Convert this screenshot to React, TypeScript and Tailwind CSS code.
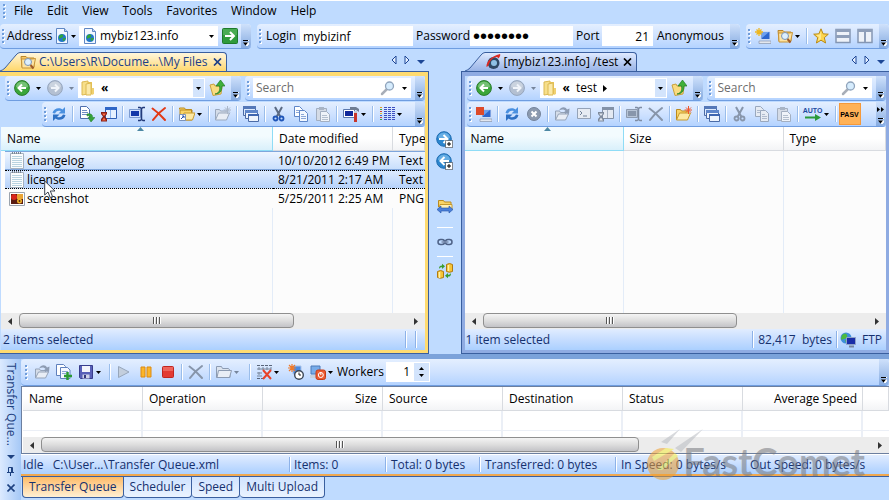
import React, { useState } from 'react';
import clsx from 'clsx';

type IconProps = { off?: boolean };

const Svg: React.FC<{ children: React.ReactNode; w?: number; h?: number }> = ({ children, w = 16, h = 16 }) => (
  <svg width={w} height={h} viewBox={`0 0 ${w} ${h}`} className="block shrink-0" aria-hidden="true">
    {children}
  </svg>
);

const Caret: React.FC<{ color?: string }> = ({ color = '#000' }) => (
  <Svg w={5} h={3}>
    <path d="M0 0h5L2.500 3z" fill={color} />
  </Svg>
);

const GlobePage = () => (
  <Svg>
    <path d="M2.500.5h8l3 3v12h-11z" fill="#f2f7ff" stroke="#5f87c4" />
    <path d="M10.500.5v3h3" fill="#c5d8f3" stroke="#5f87c4" />
    <circle cx="8" cy="10" r="4" fill="#2277c8" />
    <path d="M5 8q3-3 4-1t-2 3-2 1zM9 10l3 0-2 3q-2 0-1-3z" fill="#2fa53a" />
  </Svg>
);

const GoIcon = () => (
  <Svg>
    <rect x=".5" y=".5" width="15" height="15" rx="1" fill="#2f9a3c" stroke="#1e7a2c" />
    <path d="M1 1h14v6H1z" fill="#5bb862" opacity=".6" />
    <path d="M3 8h9M8 4l4 4-4 4" fill="none" stroke="#fff" strokeWidth="2" />
  </Svg>
);

const FolderSearch = () => (
  <Svg>
    <path d="M1 2.500h5l1.500 1.500H14v9H2z" fill="#f6c86a" stroke="#b9852a" />
    <path d="M1.500 5h11l3-.5-2 9.500H2z" fill="#fde3a2" stroke="#c79335" />
    <circle cx="8" cy="8" r="3.500" fill="#dcefff" stroke="#7d95b5" />
    <path d="M10.500 11l3 3.500" stroke="#a05a28" strokeWidth="2" />
  </Svg>
);

const Nav: React.FC<{ forward?: boolean }> = ({ forward }) => (
  <Svg>
    <circle cx="8" cy="8" r="7.400" fill={forward ? '#b4c0d2' : '#3aa63a'} stroke={forward ? '#95a5bd' : '#2a7b2c'} />
    <path d="M2 7a6 5.500 0 0 1 12 0q-6 3-12 0z" fill="#fff" opacity=".3" />
    {forward ? (
      <path d="M4 8h7M8 4.500L11.500 8 8 11.500" fill="none" stroke="#f0f4fa" strokeWidth="2" />
    ) : (
      <path d="M12 8H5M8 4.500L4.500 8 8 11.500" fill="none" stroke="#fff" strokeWidth="2" />
    )}
  </Svg>
);

const FolderTall = () => (
  <Svg w={14} h={16}>
    <path d="M1 2l6-1v13l-6 1z" fill="#f7df8a" stroke="#dcb953" />
    <path d="M7 2h4v12H7z" fill="#e8c458" />
    <path d="M5 4l5-1v12l-5 0z" fill="#fbe9a8" stroke="#dcb953" />
    <path d="M11 8h2v6l-2 1z" fill="#f0d172" />
  </Svg>
);

const UpFolder = () => (
  <Svg>
    <path d="M1 5l4-1 1 2 7 0-1 8-8 1.500z" fill="#f9db80" stroke="#c9a03c" />
    <path d="M6 14c5-1 5-5 4.500-8H7l4.500-6L16 6h-3c0 5-2 8-7 8z" fill="#3fb03a" stroke="#1f7d23" strokeWidth=".7" />
  </Svg>
);

const Refresh = () => (
  <Svg>
    <path d="M1.500 7c1-5 7-6 10-3.500L14 1v6.500H7.500L10 5C6.500 4 5 5.500 4 7.500z" fill="#4a90e0" />
    <path d="M14.500 9c-1 5-7 6-10 3.500L2 15V8.500h6.500L6 11c3.500 1 5-.5 6-2.500z" fill="#2e70c4" />
  </Svg>
);

const PageArrow = () => (
  <Svg>
    <path d="M1.500.5h6l3 3v9h-9z" fill="#fff" stroke="#4d6fae" />
    <path d="M3 4.500h5M3 6.500h6M3 8.500h6" stroke="#6f8dc4" />
    <path d="M8 8c4-1 6 1 5.500 3.500H16L12 16l-3-4.500h2C11 10 10 9.500 8 10z" fill="#37a33a" stroke="#1f7c28" strokeWidth=".5" />
  </Svg>
);

const TimerWindow: React.FC<IconProps> = ({ off }) => (
  <Svg>
    <path d="M4.500 1.500h11v11h-11z" fill={off ? '#e3e9f2' : '#e6f1ff'} stroke={off ? '#8392a8' : '#2f5fb4'} />
    <path d="M4 1h12v3H4z" fill={off ? '#8392a8' : '#2f66c6'} />
    <path d="M9.500 4v8" stroke={off ? '#a6b2c4' : '#8db4ee'} />
    <path d="M0 6h6v2L4 10.500 6 13v2.500H0V13l2-2.500L0 8z" fill={off ? '#7e8a9c' : '#8a2116'} />
    <path d="M1 7.500h4L3 10zM3 11.500L5 14.500H1z" fill={off ? '#dfe5ee' : '#ff6a42'} />
  </Svg>
);

const Rename: React.FC<IconProps> = ({ off }) => (
  <Svg>
    <path d="M.5 3.500h11v8H.5z" fill={off ? '#b7c4d6' : '#d5e3fb'} stroke={off ? '#8d9bb0' : '#7c9bd0'} />
    <path d="M2 5h8v5H2z" fill={off ? '#8896ab' : '#1438a8'} />
    <path d="M9 1.500h2l1.500 1 1.500-1h2M9 14.500h2l1.500-1 1.500 1h2M12.500 2v12" fill="none" stroke={off ? '#7f8da3' : '#223a7a'} strokeWidth="1.500" />
  </Svg>
);

const Cross: React.FC<IconProps> = ({ off }) => (
  <Svg>
    <path d="M1.500 2.500Q8 7 14 14M14 2Q7 7 2 14" fill="none" stroke={off ? '#8795aa' : '#e23a17'} strokeWidth="2" strokeLinecap="round" />
  </Svg>
);

const FolderLink = () => (
  <Svg>
    <path d="M.5 3.500V2h5l1 1.500h6v3M1 4h12v10H1z" fill="#f8d469" stroke="#bb8a1f" />
    <path d="M3 14l2-7h11l-2.500 7z" fill="#fde9a4" stroke="#c79a2d" />
    <path d="M.5 8.500h6v6h-6z" fill="#fff" stroke="#7b93bb" />
    <path d="M2 13l3-3M3 10h2v2" fill="none" stroke="#1e4fb0" />
  </Svg>
);

const NewFolder: React.FC<IconProps> = ({ off }) => (
  <Svg>
    <path d="M.5 14V3.500h4l1 1.500h7V8" fill={off ? '#d5dde9' : '#f8d469'} stroke={off ? '#9aa8bd' : '#bb8a1f'} />
    <path d="M.5 14l3-7h11l-3 7z" fill={off ? '#e8edf5' : '#fde9a4'} stroke={off ? '#9aa8bd' : '#c79a2d'} />
    <path d="M12.500 0v8M8.500 4H16M10 1.500l5 5M15 1.500l-5 5" stroke={off ? '#aab6c8' : '#f0562c'} />
  </Svg>
);

const Windows = () => (
  <Svg>
    <path d="M.5.5h12v9H.5z" fill="#dce9fc" stroke="#4b6ba6" />
    <path d="M0 0h13v3H0z" fill="#5578b8" />
    <path d="M2.500 4.500h12v8h-12z" fill="#eef4fd" stroke="#4b6ba6" />
    <path d="M2 4h13v3H2z" fill="#5f86ca" />
    <path d="M5.500 8.500h10v7h-10z" fill="#eef4fd" stroke="#4b6ba6" />
    <path d="M5 8h11v2H5z" fill="#3f66b0" />
  </Svg>
);

const Cut: React.FC<IconProps> = ({ off }) => (
  <Svg>
    <path d="M4 1l5.500 10M11 1L5.500 11" stroke={off ? '#8896ab' : '#5c6b84'} strokeWidth="2" />
    <circle cx="4.500" cy="12.500" r="2" fill="none" stroke={off ? '#8896ab' : '#1f55b8'} strokeWidth="1.800" />
    <circle cx="10.500" cy="12.500" r="2" fill="none" stroke={off ? '#8896ab' : '#1f55b8'} strokeWidth="1.800" />
  </Svg>
);

const Copy: React.FC<IconProps> = ({ off }) => {
  const line = off ? '#9aa8bd' : '#5f86c8';
  return (
    <Svg>
      <path d="M1.500.5h5l3 3v7h-8z" fill={off ? '#e6ebf3' : '#fff'} stroke={line} />
      <path d="M3 4.500h4M3 6.500h4" stroke={line} opacity=".7" />
      <path d="M6.500 4.500h5l3 3v8h-8z" fill={off ? '#e6ebf3' : '#f3f8ff'} stroke={line} />
      <path d="M8 8.500h3M8 10.500h5M8 12.500h5" stroke={line} opacity=".7" />
    </Svg>
  );
};

const Paste = () => (
  <Svg>
    <path d="M1.500 2.500h10v12h-10z" fill="#d4dbe6" stroke="#a3afc1" />
    <path d="M4 1h5v3H4z" fill="#a9b5c6" />
    <path d="M5.500 5.500h6l3 3v7h-9z" fill="#eff3f9" stroke="#a3afc1" />
    <path d="M7 9.500h5M7 11.500h6M7 13.500h6" stroke="#b4bfce" />
  </Svg>
);

const Tools = () => (
  <Svg>
    <path d="M.5 3.500h11v8H.5z" fill="#fff" stroke="#5b78ad" />
    <path d="M2 5h8v5H2z" fill="#11299b" />
    <path d="M7 1h6l3 2v3l-3-2H9L7 4z" fill="#6f7d92" />
    <path d="M11 5h3v3h-3z" fill="#c5ccd6" />
    <path d="M11 7h3v9h-3z" fill="#c8352b" />
  </Svg>
);

const columnDots = ['#e0a02c', '#3aa04a', '#d04a3a', '#e0c02c', '#3a6ad0', '#d04a3a', '#3aa04a'];

const Columns = () => (
  <Svg>
    {columnDots.map((color, i) => (
      <g key={i}>
        <rect x="1" y={1 + i * 2} width="2" height="1" fill={color} />
        <path d={`M5 ${1.5 + i * 2}h3M9 ${1.5 + i * 2}h3M13 ${1.5 + i * 2}h3`} stroke="#3d4fc0" />
      </g>
    ))}
  </Svg>
);

const Monitor: React.FC<{ mark: 'spark' | 'red' }> = ({ mark }) => (
  <Svg>
    <path d="M6 3.500h9v8H6z" fill="#2c66cf" stroke="#cfdcf2" />
    <path d="M7 4h7L7 10z" fill="#6da0ee" />
    <path d="M4 13h12v2.500H4z" fill="#e3e7ee" stroke="#8a97ad" strokeWidth=".7" />
    {mark === 'spark' ? (
      <path d="M4 0v8M0 4h8M1.500 1.500l5 5M6.500 1.500l-5 5" stroke="#eeb71f" strokeWidth="1.300" />
    ) : (
      <path d="M0 1h8v8H0z" fill="#dd4a2a" />
    )}
  </Svg>
);

const Star = () => (
  <Svg>
    <path d="M8 .8l2.100 5 5.200.4-4 3.500 1.300 5.300L8 12.200 3.400 15l1.300-5.300-4-3.500 5.200-.4z" fill="#fdd54f" stroke="#b98a17" />
    <path d="M8 3v8L5 13l1-4-3-2 4-.5z" fill="#fff1a8" opacity=".7" />
  </Svg>
);

const Split: React.FC<{ vertical?: boolean }> = ({ vertical }) => (
  <Svg>
    <path d="M1 1.500h14v13H1z" fill="#eef2f9" stroke="#8496b3" strokeWidth="1.500" />
    {vertical ? (
      <path d="M1 1h14v3H1zM7 1h2v13H7z" fill="#8f9fba" />
    ) : (
      <path d="M1 1h14v3H1zM1 7h14v3H1z" fill="#8f9fba" />
    )}
  </Svg>
);

const StopCircle = () => (
  <Svg>
    <circle cx="8" cy="8" r="6.500" fill="#8c9aaf" stroke="#74839a" />
    <path d="M5.500 5.500l5 5M10.500 5.500l-5 5" stroke="#fff" strokeWidth="2" />
  </Svg>
);

const OpenArrow = () => (
  <Svg>
    <path d="M1.500 14V5h4l1 1.500h5V8" fill="#d5dde9" stroke="#95a3b8" />
    <path d="M1.500 14l3-6h10l-3 6z" fill="#e8edf5" stroke="#95a3b8" />
    <path d="M5 4.500C7 1 11 0 13 3.500l2.500-1L15 8 9.500 6.500l2-1.500C10 3 8 3 5 4.500z" fill="#8d9cb3" />
  </Svg>
);

const Terminal = () => (
  <Svg>
    <path d="M1.500 2.500h13v10h-13z" fill="#e6ebf3" stroke="#95a3b8" />
    <path d="M4 5l2 2-2 2M7 10h4" fill="none" stroke="#71819a" />
  </Svg>
);

const GrayFolder = () => (
  <Svg>
    <path d="M.5 13.500v-11h5l1 2h6l1.500 2v7z" fill="#dbe3ee" stroke="#8c9bb2" />
    <path d="M1 13.500l1.500-7h13l-2 7z" fill="#e9eef6" stroke="#8c9bb2" />
  </Svg>
);

const AddPage = () => (
  <Svg>
    <path d="M.5.500h7l2 2v9h-9z" fill="#fff" stroke="#5f80bd" />
    <path d="M4.500 3.500h7l2.500 2.500v8.500h-9.500z" fill="#f4f8ff" stroke="#5f80bd" />
    <path d="M6 7.500h6M6 9.500h4" stroke="#8ca5d4" />
    <path d="M11.500 8v8M8 12h8" stroke="#2a9a34" strokeWidth="2.500" />
  </Svg>
);

const Save = () => (
  <Svg>
    <path d="M1.500 1.500h13v13h-12l-1-1z" fill="#5960b8" stroke="#383d8c" />
    <path d="M4 2h8v6H4z" fill="#f3f4fb" />
    <path d="M4.500 10.500h7v4h-7z" fill="#d0d3e8" />
    <path d="M6 11h2v3H6z" fill="#33387e" />
  </Svg>
);

const Play = () => (
  <Svg>
    <path d="M2.500 2.500L13 8 2.500 13.500z" fill="#c3cedd" stroke="#97a6bb" />
  </Svg>
);

const Pause = () => (
  <Svg>
    <path d="M3 3h4v10H3zM9 3h4v10H9z" fill="#fbb62a" stroke="#dc8a12" />
  </Svg>
);

const Stop = () => (
  <Svg>
    <rect x="2.500" y="2.500" width="11" height="11" rx="1" fill="#e33a33" stroke="#c02520" />
    <path d="M3 3h10v4H3z" fill="#f58078" opacity=".6" />
  </Svg>
);

const ClearGrid = () => (
  <Svg>
    <path d="M1 1.500h15M1 14.500h6" stroke="#59657a" strokeDasharray="3 1" />
    <path d="M1 5h14M3 3v3M7 3v3M11 3v3M15 3v3M1 9h5M3 8v3M1 12h5" stroke="#79869b" fill="none" />
    <path d="M7 6l8 9M15 6l-8 9" stroke="#e8432a" strokeWidth="2" />
  </Svg>
);

const Schedule = () => (
  <Svg>
    <path d="M5 2h8v8H5z" fill="#4b8ae0" stroke="#a9c2e8" />
    <path d="M4 0v8M0 4h8M1 1l6 6M7 1L1 7" stroke="#f07a2a" strokeWidth="1.200" />
    <circle cx="11" cy="11" r="4.300" fill="#fff" stroke="#3b4656" strokeWidth="1.400" />
    <path d="M11 8.500V11h2" fill="none" stroke="#222" />
  </Svg>
);

const PowerOff = () => (
  <Svg>
    <path d="M1 2h9v8H1z" fill="#77abe9" stroke="#4c7ab8" />
    <path d="M0 11h7v3H0z" fill="#c5d0e0" />
    <rect x="6" y="6" width="9.500" height="9.500" rx="2" fill="#ec5a32" stroke="#c43c18" />
    <circle cx="10.800" cy="11" r="2.500" fill="none" stroke="#fff" />
    <path d="M10.800 8v3" stroke="#fff" />
  </Svg>
);

const Magnifier = () => (
  <Svg>
    <path d="M2 14l5-5" stroke="#a8aeb8" strokeWidth="2.500" strokeLinecap="round" />
    <circle cx="9.500" cy="6" r="4" fill="#d6ecfd" stroke="#90a4bc" strokeWidth="1.300" />
  </Svg>
);

const Auto = () => (
  <div className="flex w-[18px] flex-col items-center">
    <span className="font-['Liberation_Sans',sans-serif] text-[7px] leading-[7px] font-bold text-[#1f4aa0]">AUTO</span>
    <Svg w={16} h={7}>
      <path d="M0 3.500h12" stroke="#2a9a3a" strokeWidth="2" />
      <path d="M10 0l6 3.500L10 7z" fill="#2a9a3a" />
    </Svg>
  </div>
);

const TransferTo: React.FC<{ left?: boolean }> = ({ left }) => (
  <Svg w={18} h={18}>
    <circle cx="8" cy="8" r="7.300" fill="#2b86cf" stroke="#1d6bb0" />
    <path d="M2 7a6 5.500 0 0 1 12 0q-6 2-12 0z" fill="#8cc8f2" opacity=".6" />
    <path d={left ? 'M13 8H5M8.500 4L4.500 8l4 4' : 'M3 8h8M7.500 4l4 4-4 4'} fill="none" stroke="#fff" strokeWidth="2" />
    <path d="M9.500 9.500h7v7h-7z" fill="#fff" stroke="#222" strokeDasharray="1 1" />
    <path d="M13 11v4M11 13h4" stroke="#000" />
  </Svg>
);

const FolderSync = () => (
  <Svg>
    <path d="M1.500 8V1.500h5l1 1.500H14v6" fill="#f8d469" stroke="#bb8a1f" />
    <path d="M3 5.500h12v5H2z" fill="#fdeeb5" stroke="#c79a2d" />
    <path d="M0 10.500L4 7v2h8V7l4 3.500L12 14v-2H4v2z" fill="#4a80dc" stroke="#2452a4" strokeWidth=".6" />
  </Svg>
);

const Chain = () => (
  <Svg w={16} h={8}>
    <rect x="1" y="1.500" width="6.500" height="5" rx="2.500" fill="none" stroke="#4e6287" strokeWidth="1.500" />
    <rect x="8.500" y="1.500" width="6.500" height="5" rx="2.500" fill="none" stroke="#4e6287" strokeWidth="1.500" />
    <path d="M4.500 4h7" stroke="#7a8cae" strokeWidth="1.500" />
  </Svg>
);

const DbSync = () => (
  <Svg>
    <path d="M9.500 1.500q3-2 6 0v7q-3 1.500-6 0zM.5 8.500q3-2 6 0v6q-3 1.500-6 0z" fill="#f6c437" stroke="#b07a12" />
    <path d="M11.500 2v6M2.500 9v6" stroke="#fff0a8" strokeWidth="1.500" />
    <path d="M2 6c0-3 1-3.500 3-3.500V.8L8 3.300 5 6V4.300C4 4 3 4.500 2 6zM14 10c0 3-1 3.500-3 3.500v1.800l-3-2.600 3-2.700v1.700c1 .3 2-.2 3-1.700z" fill="#3c9c2e" />
  </Svg>
);

const TextFile = () => (
  <Svg w={14} h={17}>
    <path d="M.5 1.500h13v15H.5z" fill="#fafcfd" stroke="#a5b1bf" />
    <path d="M2 4.500h10M2 6.500h10M2 8.500h10M2 10.500h10M2 12.500h10M2 14.500h10" stroke="#b9d3e0" />
    <path d="M2 1h10" stroke="#7b8794" strokeWidth="2" strokeDasharray="1 1" />
  </Svg>
);

const ImageFile = () => (
  <Svg w={16} h={14}>
    <path d="M.5.5h15v13H.5z" fill="#fff" stroke="#9aa3ad" />
    <path d="M2 2h12v10H2z" fill="#5a1c12" />
    <circle cx="5" cy="5" r="3" fill="#d7261c" />
    <path d="M8 2h6v5H8z" fill="#e9a437" />
    <circle cx="10.500" cy="9" r="2.500" fill="#f3b62a" />
    <circle cx="10.500" cy="9" r="1" fill="#5a2a10" />
  </Svg>
);

const SiteIcon = () => (
  <Svg>
    <circle cx="8.500" cy="9" r="6" fill="#2f4864" />
    <circle cx="9" cy="9" r="3" fill="#8fc0e4" />
    <path d="M1.500 13C1 8 6 2 15 0q1 1-1.500 4.500Q13 3 11.500 3 6 4 4 10q-.5 2.500-2.500 3z" fill="#dd2a22" />
  </Svg>
);

const NetIcon = () => (
  <Svg>
    <circle cx="6" cy="6" r="5.500" fill="#3f8fdb" />
    <path d="M2 3q4-3 5 0t-3 4-3 0zM5 8l3 1-2 2z" fill="#4cbb3e" />
    <path d="M6.500 5.500h9v7h-9z" fill="#1a2ea8" stroke="#8fa3c8" />
    <path d="M9 14.500h5" stroke="#77869f" strokeWidth="2" />
  </Svg>
);

const Grip = () => (
  <Svg w={3} h={16}>
    {[1, 5, 9, 13].map((y) => (
      <g key={y}>
        <rect x="1" y={y + 1} width="2" height="2" fill="#fff" />
        <rect x="0" y={y} width="2" height="2" fill="#6f9ddb" />
      </g>
    ))}
  </Svg>
);

const Sep = () => (
  <span className="flex w-1.5 shrink-0 justify-center" aria-hidden="true">
    <span className="h-4 w-px bg-[#9abdea]" />
    <span className="h-4 w-px bg-white" />
  </span>
);

const Tool: React.FC<{ label: string; drop?: boolean; off?: boolean; children: React.ReactNode }> = ({
  label,
  drop,
  off,
  children,
}) => (
  <button
    type="button"
    aria-label={label}
    title={label}
    className={clsx('flex h-5 shrink-0 items-center gap-0.5 pl-[3px]', drop ? 'w-[30px]' : 'w-[22px]')}
  >
    {children}
    {drop && <Caret color={off ? '#76859c' : '#000'} />}
  </button>
);

const More: React.FC<{ chevrons?: boolean }> = ({ chevrons }) => (
  <button
    type="button"
    aria-label="Toolbar options"
    className="ml-auto flex w-2.5 shrink-0 flex-col items-center justify-end self-stretch rounded-r bg-gradient-to-b from-[#cfe1fb] to-[#86abe0] pb-0.5"
  >
    {chevrons && (
      <svg width="8" height="5" viewBox="0 0 8 5" className="mb-1.5">
        <path d="M0 0l3 2.500L0 5zM4 0l3 2.500L4 5z" fill="#000" />
      </svg>
    )}
    <Svg w={6} h={6}>
      <path d="M1 .5h5M1.500 3h5L4 6z" fill="#fff" stroke="#fff" />
      <path d="M0 .5h5" stroke="#000" />
      <path d="M0 2.500h5L2.500 5.500z" fill="#000" />
    </Svg>
  </button>
);

const Toolbar: React.FC<{ className?: string; children: React.ReactNode }> = ({ className, children }) => (
  <div
    role="toolbar"
    className={clsx(
      'flex items-center overflow-hidden rounded border-b border-[#6f9de0] bg-gradient-to-b from-[#e4efff] via-[#cfe2ff] to-[#b4d3ff] pl-0.5',
      className,
    )}
  >
    <Grip />
    {children}
  </div>
);

const TabNav = () => (
  <div className="ml-auto flex items-center gap-[7px] pr-1 pb-1.5">
    <button type="button" aria-label="Previous tab">
      <Svg w={6} h={10}>
        <path d="M5 1v8L1 5z" fill="#e6f0ff" stroke="#1d4796" />
      </Svg>
    </button>
    <button type="button" aria-label="Next tab">
      <Svg w={6} h={10}>
        <path d="M1 1v8l4-4z" fill="#e6f0ff" stroke="#1d4796" />
      </Svg>
    </button>
    <button type="button" aria-label="Tab list" className="pt-1">
      <Svg w={8} h={4}>
        <path d="M0 0h8L4 4z" fill="#1d4796" />
      </Svg>
    </button>
  </div>
);

const PanelTab: React.FC<{ active?: boolean; title: string; icon: React.ReactNode }> = ({ active, title, icon }) => (
  <div className="flex h-[19px] items-stretch">
    <svg width="20" height="19" viewBox="0 0 20 19" className="block shrink-0" aria-hidden="true">
      <defs>
        <linearGradient id={active ? 'tab-a' : 'tab-b'} x1="0" y1="0" x2="0" y2="1">
          <stop offset="0" stopColor={active ? '#fff6dc' : '#dfeaff'} />
          <stop offset="1" stopColor={active ? '#ffd76a' : '#98b3e6'} />
        </linearGradient>
      </defs>
      <path d="M0 19Q3 18 5 16L16 3Q18 0 20 0v19z" fill={`url(#${active ? 'tab-a' : 'tab-b'})`} />
      <path d="M0 19Q3 18 5 16L16 3Q18 .5 20 .5" fill="none" stroke="#3a5f9f" />
    </svg>
    <div
      className={clsx(
        'flex items-center gap-[3px] rounded-tr border-t border-r border-[#3a5f9f] bg-gradient-to-b pr-1',
        active ? 'from-[#fff6dc] to-[#ffd76a] text-[#1d3f86]' : 'from-[#dfeaff] to-[#98b3e6] text-black',
      )}
    >
      {icon}
      <span>{title}</span>
      <button type="button" aria-label={`Close ${title}`} className="ml-0.5">
        <Svg w={9} h={8}>
          <path d="M1 .5l7 7M8 .5l-7 7" stroke={active ? '#1d3f86' : '#000'} strokeWidth="1.700" />
        </Svg>
      </button>
    </div>
  </div>
);

const HScroll: React.FC<{ thumb: string }> = ({ thumb }) => (
  <div className="flex h-4 shrink-0 items-center bg-[#ececec]">
    <span className="flex w-[18px] shrink-0 justify-center">
      <Svg w={4} h={7}>
        <path d="M4 0v7L0 3.500z" fill="#333" />
      </Svg>
    </span>
    <div className="flex h-full flex-1">
      <div
        className={clsx(
          'flex h-[15px] items-center justify-center rounded-sm border border-[#8f8f8f] bg-gradient-to-b from-[#f4f4f4] via-[#dedede] to-[#c3c3c7]',
          thumb,
        )}
      >
        <Svg w={8} h={7}>
          <path d="M.5 0v7M3.500 0v7M6.500 0v7" stroke="#555" />
          <path d="M1.500 0v7M4.500 0v7M7.500 0v7" stroke="#fff" />
        </Svg>
      </div>
    </div>
    <span className="flex w-[18px] shrink-0 justify-center">
      <Svg w={4} h={7}>
        <path d="M0 0v7l4-3.500z" fill="#333" />
      </Svg>
    </span>
  </div>
);

const AddressRow: React.FC<{ path: React.ReactNode }> = ({ path }) => (
  <div className="flex gap-1">
    <Toolbar className="h-[25px] w-[236px] shrink-0">
      <div className="ml-1 flex items-center">
        <button type="button" aria-label="Back" className="flex w-[33px] items-center gap-1.5">
          <Nav />
          <Caret />
        </button>
        <button type="button" aria-label="Forward" className="flex w-[31px] items-center gap-1.5">
          <Nav forward />
          <Caret color="#76859c" />
        </button>
      </div>
      <div className="flex h-5 w-[127px] items-center bg-white pl-[3px]">
        <FolderTall />
        {path}
        <button type="button" aria-label="Path history" className="mr-px ml-auto flex h-[18px] w-[11px] items-center justify-center bg-[#d3e4fc]">
          <Caret />
        </button>
      </div>
      <button type="button" aria-label="Up one level" className="ml-1">
        <UpFolder />
      </button>
      <More />
    </Toolbar>
    <Toolbar className="h-[25px] min-w-0 flex-1">
      <div className="ml-[3px] flex h-5 min-w-0 flex-1 items-center bg-white pr-1">
        <input
          type="text"
          aria-label="Search"
          placeholder="Search"
          className="min-w-0 flex-1 pl-[3px] outline-none placeholder:text-[#6d6d6d]"
        />
        <Magnifier />
        <span className="ml-1.5">
          <Caret />
        </span>
      </div>
      <span className="w-1 shrink-0" />
      <More />
    </Toolbar>
  </div>
);

const headCell =
  'h-6 border-r border-b border-[#d8dbe0] bg-gradient-to-b from-white from-50% to-[#f3f4f6] pl-1.5 text-left font-normal';
const sortedCell =
  'relative h-6 border-r border-b border-[#8fdcf6] bg-gradient-to-b from-[#f3fbfe] from-40% to-[#d9f0fb] pl-1.5 text-left font-normal';

const SortMark = () => (
  <svg width="7" height="4" viewBox="0 0 7 4" className="absolute top-0 left-1/2" aria-hidden="true">
    <path d="M3.500 0L7 4H0z" fill="#4d88a4" />
  </svg>
);

const files = [
  { name: 'changelog', date: '10/10/2012 6:49 PM', type: 'Text', image: false },
  { name: 'license', date: '8/21/2011 2:17 AM', type: 'Text', image: false },
  { name: 'screenshot', date: '5/25/2011 2:25 AM', type: 'PNG', image: true },
];

const rowLook = (name: string) => {
  if (name === 'changelog') return 'border-y border-[#7fa6dc] bg-gradient-to-b from-[#eef5ff] to-[#c9dffc]';
  if (name === 'license') return 'border-y border-dotted border-black bg-gradient-to-b from-[#dceafe] to-[#b6d2fa]';
  return 'border-y border-transparent';
};

const LocalList = () => (
  <table className="h-full w-full table-fixed border-separate border-spacing-0 whitespace-nowrap">
    <colgroup>
      <col className="w-[272px]" />
      <col className="w-[120px]" />
      <col />
    </colgroup>
    <thead>
      <tr>
        <th className={sortedCell}>
          Name
          <SortMark />
        </th>
        <th className={headCell}>Date modified</th>
        <th className={headCell}>Type</th>
      </tr>
    </thead>
    <tbody>
      {files.map((file) => (
        <tr key={file.name} className="h-[19px]">
          <td className="pl-1">
            <div className={clsx('flex h-[19px] items-center gap-0.5 pl-1', rowLook(file.name))}>
              <span className="flex w-4 justify-center">{file.image ? <ImageFile /> : <TextFile />}</span>
              {file.name}
            </div>
          </td>
          <td>
            <div className={clsx('flex h-[19px] items-center pl-[5px]', rowLook(file.name))}>{file.date}</div>
          </td>
          <td>
            <div className={clsx('flex h-[19px] items-center pl-1.5', rowLook(file.name))}>{file.type}</div>
          </td>
        </tr>
      ))}
      <tr>
        <td className="border-r border-[#e3ecf8]" />
        <td className="border-r border-[#e3ecf8]" />
        <td />
      </tr>
    </tbody>
  </table>
);

const RemoteList = () => (
  <table className="h-full w-full table-fixed border-separate border-spacing-0 whitespace-nowrap">
    <colgroup>
      <col className="w-[159px]" />
      <col className="w-[160px]" />
      <col />
    </colgroup>
    <thead>
      <tr>
        <th className={sortedCell}>
          Name
          <SortMark />
        </th>
        <th className={headCell}>Size</th>
        <th className={headCell}>Type</th>
      </tr>
    </thead>
    <tbody>
      <tr>
        <td className="border-r border-[#e3ecf8]" />
        <td className="border-r border-[#e3ecf8]" />
        <td />
      </tr>
    </tbody>
  </table>
);

const statusBar =
  'flex shrink-0 items-center whitespace-nowrap bg-gradient-to-b from-[#e1edff] from-0% via-[#c6ddff] via-50% to-[#abd0ff] text-[#15306e]';

const StatusLine = () => (
  <span className="flex shrink-0 self-stretch py-0.5">
    <span className="w-px bg-[#8db2e8]" />
    <span className="w-px bg-white" />
  </span>
);

const queueColumns = [
  { name: 'Name' },
  { name: 'Operation' },
  { name: 'Size', right: true },
  { name: 'Source' },
  { name: 'Destination' },
  { name: 'Status' },
  { name: 'Average Speed', right: true },
];

const queueTabs = ['Transfer Queue', 'Scheduler', 'Speed', 'Multi Upload'];

const Watermark = () => (
  <div className="pointer-events-none absolute right-6 bottom-4 flex items-end opacity-55">
    <svg width="56" height="56" viewBox="0 0 56 56" className="-mr-2 block" aria-hidden="true">
      <path d="M14 14L33 1 20 16zM28 20L56 1 34 24z" fill="#b9bcc2" />
      <circle cx="16" cy="36" r="16" fill="#f0a030" />
      <path d="M5 29L19 20l8 1L7 33zM10 42L28 25l3 3-16 14z" fill="#f7ec3c" />
    </svg>
    <span className="-ml-3 font-['Lato',sans-serif] text-[38px] leading-[46px] font-bold text-[#77797e]">FastComet</span>
  </div>
);

const App: React.FC = () => {
  const [address, setAddress] = useState('mybiz123.info');
  const [login, setLogin] = useState('mybizinf');
  const [password, setPassword] = useState('password');
  const [port, setPort] = useState('21');
  const [workers, setWorkers] = useState(1);
  const [queueTab, setQueueTab] = useState('Transfer Queue');

  return (
    <div className="relative flex h-screen min-h-[440px] flex-col overflow-hidden border-t border-white bg-[#bfdbff] font-['Open_Sans','Noto_Sans',sans-serif] text-[12px] leading-4 text-black">
      <nav className="flex h-[22px] shrink-0 items-center gap-3.5 pb-0.5 pl-[3px]">
        <Grip />
        {['File', 'Edit', 'View', 'Tools', 'Favorites', 'Window', 'Help'].map((item) => (
          <button key={item} type="button" className={clsx(item === 'File' && '-ml-1.5')}>
            {item}
          </button>
        ))}
      </nav>

      <div className="flex shrink-0 gap-1.5 pt-px">
        <Toolbar className="h-[25px] w-[251px] shrink-0">
          <label htmlFor="address" className="ml-0.5 w-[47px]">
            Address
          </label>
          <button type="button" aria-label="Protocol" className="flex w-[25px] items-center gap-px">
            <GlobePage />
            <Caret />
          </button>
          <div className="flex h-5 w-[139px] items-center gap-0.5 bg-white pr-1 pl-[3px]">
            <GlobePage />
            <input id="address" value={address} onChange={(e) => setAddress(e.target.value)} className="min-w-0 flex-1 outline-none" />
            <Caret />
          </div>
          <button type="button" aria-label="Connect" className="ml-1">
            <GoIcon />
          </button>
          <More />
        </Toolbar>
        <Toolbar className="h-[25px] w-[483px] shrink-0">
          <label htmlFor="login" className="ml-1 w-[34px]">
            Login
          </label>
          <input id="login" value={login} onChange={(e) => setLogin(e.target.value)} className="h-5 w-[113px] bg-white pl-[3px] outline-none" />
          <label htmlFor="password" className="ml-[3px] w-[54px]">
            Password
          </label>
          <input
            id="password"
            type="password"
            value={password}
            onChange={(e) => setPassword(e.target.value)}
            className="h-5 w-[103px] bg-white pl-[3px] font-['Liberation_Sans',sans-serif] text-[20px] outline-none"
          />
          <label htmlFor="port" className="ml-[3px] w-[26px]">
            Port
          </label>
          <input id="port" value={port} onChange={(e) => setPort(e.target.value)} className="h-5 w-[51px] bg-white pr-1 text-right outline-none" />
          <button type="button" className="ml-1">
            Anonymous
          </button>
          <More />
        </Toolbar>
        <Toolbar className="h-[25px] min-w-0 flex-1">
          <span className="w-px" />
          <Tool label="New connection">
            <Monitor mark="spark" />
          </Tool>
          <Tool label="Browse sites" drop>
            <FolderSearch />
          </Tool>
          <Sep />
          <Tool label="Favorites">
            <Star />
          </Tool>
          <Tool label="Split horizontally">
            <Split />
          </Tool>
          <Tool label="Split vertically">
            <Split vertical />
          </Tool>
          <More />
        </Toolbar>
      </div>

      <main className="flex min-h-0 flex-1">
        <section className="flex min-w-0 flex-1 flex-col">
          <div className="flex h-[22px] shrink-0 items-end">
            <PanelTab active title="C:\Users\R\Docume...\My Files" icon={<FolderSearch />} />
            <TabNav />
          </div>
          <div className="flex min-h-0 flex-1 flex-col border border-l-0 border-[#3a5f9f]">
            <div className="flex min-h-0 flex-1 flex-col border-t-4 border-r-[3px] border-b-[3px] border-[#ffdb70] pl-px">
              <div className="flex shrink-0 flex-col gap-px bg-[#bfdbff] pl-1">
                <AddressRow path={<span className="ml-1.5 font-bold">«</span>} />
                <Toolbar className="ml-[37px] h-[25px]">
                  <span className="w-px" />
                  <Tool label="Refresh"><Refresh /></Tool>
                  <Sep />
                  <Tool label="Transfer"><PageArrow /></Tool>
                  <Tool label="Delayed transfer"><TimerWindow /></Tool>
                  <Sep />
                  <Tool label="Rename"><Rename /></Tool>
                  <Tool label="Delete"><Cross /></Tool>
                  <Sep />
                  <Tool label="Folder shortcuts" drop><FolderLink /></Tool>
                  <Sep />
                  <Tool label="New folder" off><NewFolder off /></Tool>
                  <Sep />
                  <Tool label="Windows"><Windows /></Tool>
                  <Sep />
                  <Tool label="Cut"><Cut /></Tool>
                  <Tool label="Copy"><Copy /></Tool>
                  <Tool label="Paste"><Paste /></Tool>
                  <Sep />
                  <Tool label="Tools" drop><Tools /></Tool>
                  <Sep />
                  <Tool label="View" drop><Columns /></Tool>
                  <More />
                </Toolbar>
              </div>
              <div className="min-h-0 flex-1 overflow-hidden bg-[#fcfcfc]">
                <LocalList />
              </div>
              <HScroll thumb="w-[71%]" />
              <div className={clsx(statusBar, 'h-[21px]')}>
                <span className="flex-1 pl-0.5">2 items selected</span>
                <StatusLine />
                <span className="w-2" />
                <StatusLine />
                <span className="w-2" />
              </div>
            </div>
          </div>
        </section>

        <aside className="flex w-8 shrink-0 flex-col items-center pt-[82px]">
          <button type="button" aria-label="Send to right"><TransferTo /></button>
          <button type="button" aria-label="Send to left" className="mt-1"><TransferTo left /></button>
          <button type="button" aria-label="Synchronize folders" className="mt-7"><FolderSync /></button>
          <span className="mt-3 h-px w-4 bg-white" />
          <button type="button" aria-label="Link panels" className="mt-2.5"><Chain /></button>
          <span className="mt-2.5 h-px w-4 bg-white" />
          <button type="button" aria-label="Compare" className="mt-1.5"><DbSync /></button>
        </aside>

        <section className="flex min-w-0 flex-1 flex-col">
          <div className="flex h-[22px] shrink-0 items-end pl-1">
            <PanelTab title="[mybiz123.info] /test" icon={<SiteIcon />} />
            <TabNav />
          </div>
          <div className="flex min-h-0 flex-1 flex-col border border-r-0 border-[#3a5f9f]">
            <div className="flex min-h-0 flex-1 flex-col border-[3px] border-t-4 border-[#8fabe2]">
              <div className="flex shrink-0 flex-col gap-px pl-0.5">
                <AddressRow
                  path={
                    <span className="ml-1.5 flex items-center gap-1.5">
                      <b>«</b>
                      <span>test</span>
                      <Svg w={4} h={7}>
                        <path d="M0 0v7l4-3.500z" fill="#000" />
                      </Svg>
                    </span>
                  }
                />
                <Toolbar className="h-[25px]">
                  <span className="w-px" />
                  <Tool label="Disconnect"><Monitor mark="red" /></Tool>
                  <Sep />
                  <Tool label="Refresh"><Refresh /></Tool>
                  <Tool label="Abort" off><StopCircle /></Tool>
                  <Sep />
                  <Tool label="Transfer" off><OpenArrow /></Tool>
                  <Tool label="Raw command" off><Terminal /></Tool>
                  <Tool label="Delayed transfer" off><TimerWindow off /></Tool>
                  <Sep />
                  <Tool label="Rename" off><Rename off /></Tool>
                  <Tool label="Delete" off><Cross off /></Tool>
                  <Sep />
                  <Tool label="New folder"><NewFolder /></Tool>
                  <Sep />
                  <Tool label="Windows"><Windows /></Tool>
                  <Sep />
                  <Tool label="Cut" off><Cut off /></Tool>
                  <Tool label="Copy" off><Copy off /></Tool>
                  <Tool label="Paste" off><Paste /></Tool>
                  <Sep />
                  <Tool label="Transfer mode" drop><Auto /></Tool>
                  <span className="w-0.5" />
                  <Sep />
                  <button
                    type="button"
                    className="h-[22px] w-[22px] shrink-0 border border-[#f5993a] bg-[#ffb257] font-['Liberation_Sans',sans-serif] text-[7px] leading-none font-bold"
                  >
                    PASV
                  </button>
                  <More chevrons />
                </Toolbar>
              </div>
              <div className="min-h-0 flex-1 overflow-hidden bg-[#fcfcfc]">
                <RemoteList />
              </div>
              <HScroll thumb="w-[66%]" />
              <div className={clsx(statusBar, 'h-[21px] gap-0.5')}>
                <span className="flex-1 pl-px">1 item selected</span>
                <StatusLine />
                <span className="px-0.5">82,417&nbsp; bytes</span>
                <StatusLine />
                <NetIcon />
                <span className="px-1">FTP</span>
              </div>
            </div>
          </div>
        </section>
      </main>

      <div className="h-[5px] shrink-0 bg-[#7ba2da]" />

      <div className="flex shrink-0">
        <aside className="flex w-[21px] shrink-0 flex-col items-center bg-gradient-to-r from-[#dceaff] to-[#a5c8f6] pt-1 pb-2 text-[#1d4180]">
          <span className="[writing-mode:vertical-rl]">Transfer Que...</span>
          <div className="mt-auto flex flex-col items-center gap-2">
            <button type="button" aria-label="Menu">
              <Svg w={8} h={4}>
                <path d="M0 0h8L4 4z" fill="#1d4180" />
              </Svg>
            </button>
            <button type="button" aria-label="Pin">
              <Svg w={7} h={9}>
                <path d="M1.500 5V.5h4V5M0 5.500h7M3.500 6v3M4.500 1v4" fill="none" stroke="#1d4180" />
              </Svg>
            </button>
            <button type="button" aria-label="Close queue">
              <Svg w={8} h={8}>
                <path d="M.5.5l7 7M7.500.5l-7 7" stroke="#1d4180" strokeWidth="1.600" />
              </Svg>
            </button>
          </div>
        </aside>

        <section className="flex min-w-0 flex-1 flex-col">
          <Toolbar className="h-[27px] pl-1">
            <span className="w-[3px]" />
            <Tool label="Load queue" off><OpenArrow /></Tool>
            <Tool label="Add to queue"><AddPage /></Tool>
            <Tool label="Save queue" drop><Save /></Tool>
            <span className="w-0.5" />
            <Sep />
            <Tool label="Start" off><Play /></Tool>
            <Tool label="Pause"><Pause /></Tool>
            <Tool label="Stop"><Stop /></Tool>
            <Sep />
            <Tool label="Remove" off><Cross off /></Tool>
            <Sep />
            <Tool label="Folder" drop off><GrayFolder /></Tool>
            <span className="w-1" />
            <Sep />
            <Tool label="Clear queue" drop><ClearGrid /></Tool>
            <span className="w-0.5" />
            <Tool label="Schedule"><Schedule /></Tool>
            <Tool label="When done" drop><PowerOff /></Tool>
            <label htmlFor="workers" className="w-[49px]">
              Workers
            </label>
            <div className="flex h-5 w-11 items-center bg-white">
              <input
                id="workers"
                value={workers}
                onChange={(e) => setWorkers(Number(e.target.value) || 1)}
                className="w-7 pr-1 text-right outline-none"
              />
              <div className="flex h-[18px] w-[15px] flex-col items-center justify-center gap-1 bg-[#d3e4fc]">
                <button type="button" aria-label="More workers" onClick={() => setWorkers(workers + 1)}>
                  <Svg w={5} h={3}>
                    <path d="M0 3h5L2.500 0z" />
                  </Svg>
                </button>
                <button type="button" aria-label="Fewer workers" onClick={() => setWorkers(Math.max(1, workers - 1))}>
                  <Caret />
                </button>
              </div>
            </div>
            <More />
          </Toolbar>

          <div className="border-y border-l border-[#6c7f9f] bg-white pl-px">
            <table className="w-full table-fixed border-separate border-spacing-0 whitespace-nowrap">
              <colgroup>
                {queueColumns.map((col) => (
                  <col key={col.name} className="w-[120px]" />
                ))}
                <col />
              </colgroup>
              <thead>
                <tr>
                  {queueColumns.map((col) => (
                    <th key={col.name} className={clsx(headCell, 'pr-[5px]', col.right && 'text-right')}>
                      {col.name}
                    </th>
                  ))}
                  <th className={headCell} />
                </tr>
              </thead>
              <tbody>
                <tr>
                  {queueColumns.map((col) => (
                    <td key={col.name} className="h-5 border-r-2 border-b border-[#ebeff6]" />
                  ))}
                  <td className="border-b border-[#ebeff6]" />
                </tr>
                <tr>
                  {queueColumns.map((col) => (
                    <td key={col.name} className="h-1.5 border-r-2 border-[#ebeff6]" />
                  ))}
                  <td />
                </tr>
              </tbody>
            </table>
            <HScroll thumb="w-[72%]" />
          </div>

          <div className={clsx(statusBar, 'h-[22px] border-t border-b-2 border-t-white border-b-[#f0a850]')}>
            <span className="w-[268px] pl-0.5">Idle &nbsp; C:\User...\Transfer Queue.xml</span>
            <StatusLine />
            <span className="w-[94px] pl-[3px]">Items: 0</span>
            <StatusLine />
            <span className="w-[92px] pl-1">Total: 0 bytes</span>
            <StatusLine />
            <span className="w-[134px] pl-1">Transferred: 0 bytes</span>
            <StatusLine />
            <span className="w-[131px] pl-1">In Speed: 0 bytes/s</span>
            <span className="pl-0.5">Out Speed: 0 bytes/s</span>
          </div>

          <div className="flex h-6 border-t border-[#3a5f9f] pl-px" role="tablist">
            {queueTabs.map((tab) => (
              <button
                key={tab}
                type="button"
                role="tab"
                aria-selected={tab === queueTab}
                onClick={() => setQueueTab(tab)}
                className={clsx(
                  'mb-0.5 rounded-b border border-t-0 border-l-0 border-[#3a5f9f] px-1.5 text-[#15306e] first:border-l',
                  tab === queueTab ? 'bg-gradient-to-b from-[#fdbb66] to-[#fff0d4]' : 'bg-gradient-to-b from-[#d0e3ff] to-[#eaf3ff]',
                )}
              >
                {tab}
              </button>
            ))}
          </div>
        </section>
      </div>

      <svg width="12" height="19" viewBox="0 0 12 19" className="pointer-events-none absolute top-[179px] left-11" aria-hidden="true">
        <path d="M.7 1v14l3.300-3 2.200 5.500 2.300-1L6.300 11H11z" fill="#fff" stroke="#3d4450" />
      </svg>
      <Watermark />
    </div>
  );
};

export default App;
